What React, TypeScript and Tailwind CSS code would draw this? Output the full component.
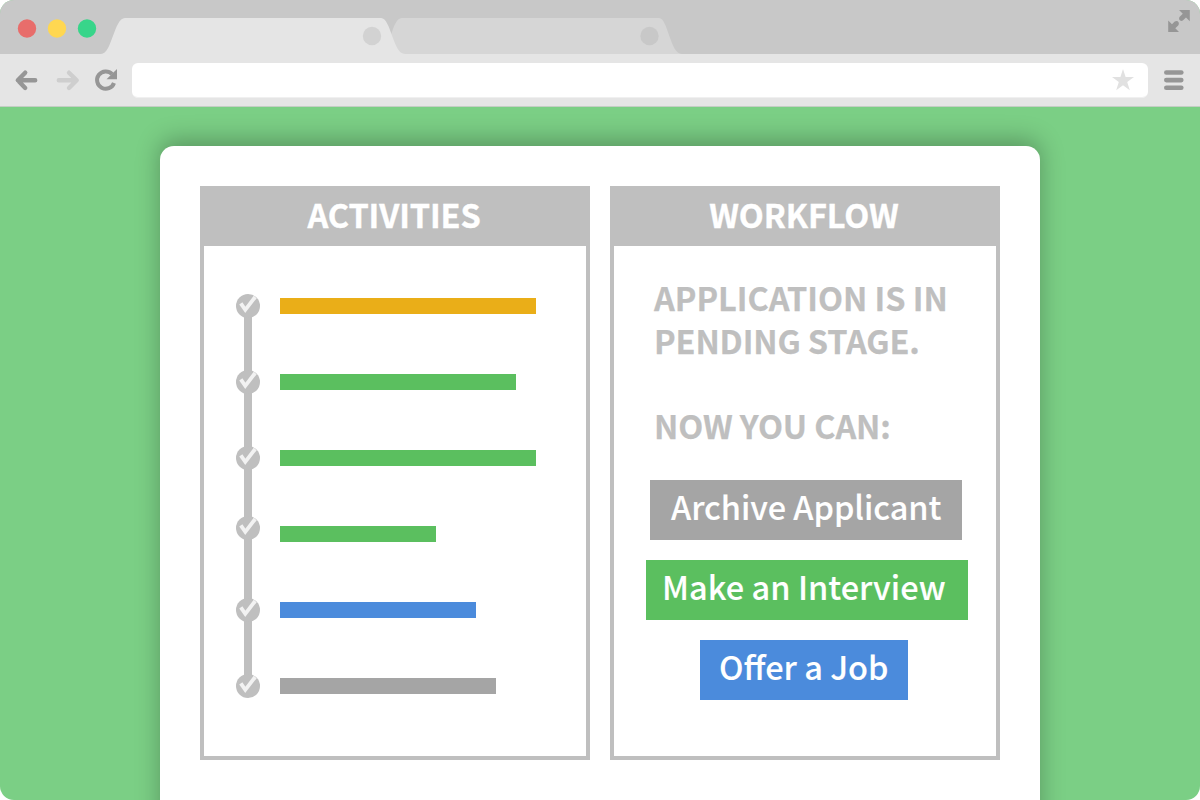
const activities = [
  { node: "mt-12", bar: "mt-[52px] w-64 bg-[#eaae18]" },
  { node: "mt-[52px]", bar: "mt-[60px] w-[236px] bg-[#5bbf5f]" },
  { node: "mt-[52px]", bar: "mt-[60px] w-64 bg-[#5bbf5f]" },
  { node: "mt-[46px]", bar: "mt-[60px] w-[156px] bg-[#5bbf5f]" },
  { node: "mt-[58px]", bar: "mt-[60px] w-[196px] bg-[#4b8bdc]" },
  { node: "mt-[52px]", bar: "mt-[60px] w-[216px] bg-[#a5a5a5]" },
];

const font = "font-['Noto_Sans_CJK_SC','Noto_Sans',sans-serif]";

function TabStrip() {
  return (
    <div className="flex h-[54px] bg-[#c8c8c8]">
      <svg className="block h-[54px] w-full" viewBox="0 0 1200 54">
        <path d="M380 54 C390 54 391 18 402 18 H659 C668 18 670 54 682 54 Z" fill="#d6d6d6" />
        <path d="M101 54 C112 54 114 18 125 18 H381 C391 18 393 54 405 54 Z" fill="#e5e5e5" />
        <circle cx="27" cy="28.5" r="9.2" fill="#e86d6b" />
        <circle cx="57" cy="28.5" r="9.2" fill="#ffd751" />
        <circle cx="87" cy="28.5" r="9.2" fill="#38d58a" />
        <circle cx="372" cy="36" r="9.2" fill="#d2d2d2" />
        <circle cx="649.5" cy="36" r="9.2" fill="#c8c8c8" />
        <g fill="#969696">
          <path d="M1179 10 H1189.8 V21.3 L1186 17.5 L1182.8 20.6 Q1180.5 21.5 1179.3 19.8 Q1178.6 18 1179.7 16.8 L1182.8 13.8 Z" />
          <path d="M1168.2 20.5 L1172 24.3 L1174.7 21.5 Q1177.5 20.3 1178.7 22.5 Q1179.3 24 1178.2 25.4 L1175.3 28.2 L1179 32 H1168.2 Z" />
        </g>
      </svg>
    </div>
  );
}

function Toolbar() {
  return (
    <div className="flex h-[53px] items-start border-b border-[#c4cec4] bg-[#e5e5e5] pt-[9px]">
      <svg className="h-[35px] w-[132px] shrink-0" viewBox="0 63 132 35" fill="none">
        <path d="M35.2 80.3 H18 M25.2 72.7 L17.8 80.3 L25.2 88" stroke="#969696" strokeWidth="4.4" strokeLinecap="round" strokeLinejoin="round" />
        <path d="M58.8 80.3 H76 M69 72.7 L76.7 80.3 L69 88" stroke="#cecece" strokeWidth="4.4" strokeLinecap="round" strokeLinejoin="round" />
        <path d="M114 83 A8.7 8.7 0 1 1 112.1 74.1" stroke="#969696" strokeWidth="4" />
        <path d="M117 69 V79.3 H106.5 Z" fill="#969696" />
      </svg>
      <div className="flex h-[35px] w-[1016px] shrink-0 items-center justify-end rounded-md border-b border-[#f0f0f0] bg-white pr-[14px]">
        <svg className="h-[22px] w-[22px]" viewBox="0 0 22 22">
          <path d="M11 0 L13.6 8 H22 L15.2 13 L17.8 21.2 L11 16.2 L4.2 21.2 L6.8 13 L0 8 H8.4 Z" fill="#e1e1e1" />
        </svg>
      </div>
      <svg className="ml-4 mt-[7px] h-5 w-5" viewBox="0 0 20 20" fill="#969696">
        <rect x="0" y="0.2" width="19.6" height="4.6" rx="2.3" />
        <rect x="0" y="7.8" width="19.6" height="4.6" rx="2.3" />
        <rect x="0" y="15.4" width="19.6" height="4.6" rx="2.3" />
      </svg>
    </div>
  );
}

function CheckNode({ className }: { className: string }) {
  return (
    <svg className={`block h-6 w-6 shrink-0 ${className}`} viewBox="0 0 24 24">
      <circle cx="12" cy="12" r="12" fill="#bfbfbf" />
      <path d="M4.8 9.4 L9.3 15.8 L19.2 3" fill="none" stroke="#f2f2f2" strokeWidth="3.8" />
    </svg>
  );
}

function PanelHeader({ children }: { children: string }) {
  return (
    <h2 className="h-14 bg-[#bfbfbf] pr-[2px] text-center text-[32.5px] leading-[48px] font-bold tracking-[-0.12px] text-white [-webkit-text-stroke:0.35px_#fff]">
      {children}
    </h2>
  );
}

export default function App() {
  return (
    <div className="h-[800px] w-[1200px] overflow-hidden bg-white">
      <div className={`flex h-full flex-col overflow-hidden rounded-[14px] bg-[#7bcf85] ${font}`}>
        <TabStrip />
        <Toolbar />
        <main className="flex flex-1 justify-center overflow-hidden pt-[39px]">
          <div className="flex h-[700px] w-[880px] shrink-0 gap-5 rounded-t-[14px] bg-white px-10 pt-10 shadow-[0_-6px_24px_rgba(0,0,0,0.28)]">
            <section className="h-[574px] w-[390px] border-4 border-[#bfbfbf]">
              <PanelHeader>ACTIVITIES</PanelHeader>
              <div className="flex pl-8">
                <div className="flex h-[452px] w-6 flex-col bg-[linear-gradient(90deg,transparent_8px,#bfbfbf_8px,#bfbfbf_16px,transparent_16px)] bg-[length:24px_380px] bg-[position:0_60px] bg-no-repeat">
                  {activities.map((item, i) => (
                    <CheckNode key={i} className={item.node} />
                  ))}
                </div>
                <div className="ml-5 flex flex-col">
                  {activities.map((item, i) => (
                    <div key={i} className={`h-4 shrink-0 ${item.bar}`} />
                  ))}
                </div>
              </div>
            </section>
            <section className="h-[574px] w-[390px] border-4 border-[#bfbfbf]">
              <PanelHeader>WORKFLOW</PanelHeader>
              <div className="pt-[29px]">
                <div className="h-[205px] pl-10 text-[32.5px] leading-[43px] font-bold tracking-[-0.14px] whitespace-nowrap text-[#bfbfbf] [-webkit-text-stroke:0.25px_#bfbfbf]">
                  <p className="tracking-[-0.05px]">APPLICATION IS IN</p>
                  <p>PENDING STAGE.</p>
                  <p className="mt-[42px]">NOW YOU CAN:</p>
                </div>
                <div className="flex flex-col items-start gap-5 text-[32.5px] leading-[52px] font-medium tracking-[-0.05px] whitespace-nowrap text-white [-webkit-text-stroke:0.1px_#fff]">
                  <button className="ml-9 h-[60px] w-[312px] bg-[#a5a5a5] pb-2 pl-[21px] text-left">Archive Applicant</button>
                  <button className="ml-8 h-[60px] w-[322px] bg-[#5bbf5f] pb-2 pl-4 text-left tracking-[0.04px]">Make an Interview</button>
                  <button className="ml-[86px] h-[60px] w-52 bg-[#4b8bdc] pb-2 pl-[19px] text-left tracking-normal">Offer a Job</button>
                </div>
              </div>
            </section>
          </div>
        </main>
      </div>
    </div>
  );
}
